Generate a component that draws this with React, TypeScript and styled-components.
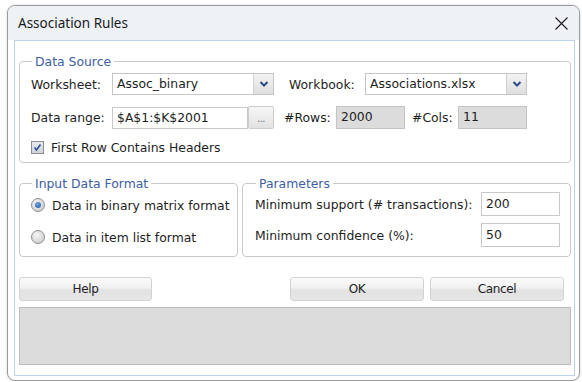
import { FC, ReactNode } from 'react';
import styled, { createGlobalStyle } from 'styled-components';

const GlobalStyle = createGlobalStyle`
  html, body {
    margin: 0;
    background: #ffffff;
  }
  * {
    box-sizing: border-box;
  }
`;

const TEXT_FONT = '"DejaVu Sans", Verdana, sans-serif';

const Window = styled.div`
  margin: 5px 0 0 7px;
  width: 573px;
  height: 376px;
  border: 1px solid #9b9b9b;
  border-radius: 8px;
  overflow: hidden;
  display: flex;
  flex-direction: column;
  background: #ffffff;
  box-shadow: 0 0 3px rgba(0, 0, 0, 0.18);
`;

const TitleBar = styled.div`
  height: 34px;
  flex: none;
  display: flex;
  align-items: center;
  justify-content: space-between;
  padding: 0 10px 0 10px;
  background: #eef2f7;
  font-family: 'Noto Sans', 'Open Sans', sans-serif;
  font-size: 13.5px;
  color: #1b1b1b;
`;

const CloseButton = styled.button`
  border: 0;
  background: transparent;
  padding: 0;
  width: 16px;
  height: 16px;
  display: flex;
  align-items: center;
  justify-content: center;
`;

const Frame = styled.div`
  flex: 1;
  margin: 0 4px 4px 6px;
  border: 1px solid #bcd3ee;
  padding: 0 3px 9px 4px;
  display: flex;
  flex-direction: column;
  font-family: ${TEXT_FONT};
  font-size: 12.4px;
  color: #1e1e1e;
`;

const Group = styled.fieldset<{ $pad: string }>`
  margin: 0;
  min-width: 0;
  border: 1px solid #cacaca;
  border-radius: 4px;
  padding: ${p => p.$pad};
  display: flex;
  flex-direction: column;
`;

const Legend = styled.legend`
  margin-left: 1px;
  padding: 0 3px;
  color: #3c60a4;
  font-size: 12.4px;
  line-height: 15px;
`;

const Row = styled.div<{ $h: number }>`
  display: flex;
  align-items: center;
  height: ${p => p.$h}px;
  white-space: nowrap;
`;

const Label = styled.span<{ $w?: number }>`
  flex: none;
  width: ${p => (p.$w ? `${p.$w}px` : 'auto')};
  white-space: nowrap;
`;

const Combo = styled.div<{ $w: number }>`
  flex: none;
  width: ${p => p.$w}px;
  height: 22px;
  display: flex;
  border: 1px solid #c6c6c6;
  background: #ffffff;
`;

const ComboText = styled.span`
  flex: 1;
  padding-left: 4px;
  line-height: 20px;
`;

const ComboArrow = styled.span`
  flex: none;
  width: 20px;
  display: flex;
  align-items: center;
  justify-content: center;
  border-left: 1px solid #d0d0d0;
  background: linear-gradient(#f3f3f3, #dedede);
`;

const TextField = styled.div<{ $w: number; $readOnly?: boolean }>`
  flex: none;
  width: ${p => p.$w}px;
  height: ${p => (p.$readOnly ? 23 : 22)}px;
  padding-left: 4px;
  line-height: 20px;
  border: 1px solid ${p => (p.$readOnly ? '#c4c4c4' : '#c9c9c9')};
  background: ${p => (p.$readOnly ? '#dcdcdc' : '#ffffff')};
`;

const NumberField = styled.div`
  flex: none;
  width: 79px;
  height: 24px;
  padding-left: 4px;
  line-height: 22px;
  border: 1px solid #c9c9c9;
  background: #ffffff;
`;

const EllipsisButton = styled.div`
  flex: none;
  width: 26px;
  height: 23px;
  border: 1px solid #cdcdcd;
  border-radius: 2px;
  background: linear-gradient(#f7f7f7, #e2e2e2);
  color: #707070;
  font-size: 10px;
  text-align: center;
  line-height: 24px;
  letter-spacing: -0.5px;
`;

const Gap = styled.span<{ $w: number }>`
  flex: none;
  width: ${p => p.$w}px;
`;

const CheckBox = styled.span`
  flex: none;
  width: 13px;
  height: 13px;
  margin-right: 7px;
  border: 1px solid #8e8e8e;
  background: linear-gradient(#e6e9ee, #cfd4db);
  display: flex;
  align-items: center;
  justify-content: center;
`;

const Radio = styled.span<{ $checked?: boolean }>`
  flex: none;
  width: 14px;
  height: 14px;
  margin-right: 7px;
  border-radius: 50%;
  border: 1px solid #8f8f8f;
  background: radial-gradient(circle at 40% 35%, #f6f6f6, #c4c4c4);
  display: flex;
  align-items: center;
  justify-content: center;
  &::after {
    content: '';
    display: ${p => (p.$checked ? 'block' : 'none')};
    width: 6px;
    height: 6px;
    border-radius: 50%;
    background: radial-gradient(circle at 40% 35%, #6fa7e6, #1c4f98);
  }
`;

const RadioList = styled.div`
  display: flex;
  flex-direction: column;
  gap: 8px;
  padding-top: 1px;
`;

const ParamList = styled.div`
  display: flex;
  flex-direction: column;
  gap: 7px;
`;

const LowerGroups = styled.div`
  display: flex;
  gap: 4px;
  margin-top: 13px;
`;

const ButtonBar = styled.div`
  display: flex;
  gap: 6px;
  margin-top: 20px;
  padding-right: 7px;
`;

const Spacer = styled.div`
  flex: 1;
`;

const Button = styled.button<{ $w?: number }>`
  width: ${p => p.$w ?? 134}px;
  height: 24px;
  padding: 0;
  border: 1px solid #d2d2d2;
  border-radius: 3px;
  background: linear-gradient(#fbfbfb 0%, #f1f1f1 45%, #e2e2e2 55%, #e6e6e6 100%);
  font-family: ${TEXT_FONT};
  font-size: 12px;
  letter-spacing: -0.4px;
  color: #222222;
`;

const StatusArea = styled.div`
  margin-top: 6px;
  height: 58px;
  border: 1px solid #bdbdbd;
  background: #dcdcdc;
`;

const Chevron: FC = () => (
  <svg width="10" height="6" viewBox="0 0 10 6">
    <polyline points="1.5,1 5,4.5 8.5,1" fill="none" stroke="#2b4c86" strokeWidth="2" />
  </svg>
);

const ComboBox: FC<{ width: number; value: string }> = ({ width, value }) => (
  <Combo $w={width}>
    <ComboText>{value}</ComboText>
    <ComboArrow>
      <Chevron />
    </ComboArrow>
  </Combo>
);

const RadioOption: FC<{ checked?: boolean; children: ReactNode }> = ({ checked, children }) => (
  <Row $h={24}>
    <Radio $checked={checked} />
    <Label>{children}</Label>
  </Row>
);

const App: FC = () => {
  return (
    <>
      <GlobalStyle />
      <Window>
        <TitleBar>
          <span>Association Rules</span>
          <CloseButton aria-label="Close">
            <svg width="13" height="13" viewBox="0 0 13 13">
              <path d="M0.5 0.5 L12.5 12.5 M12.5 0.5 L0.5 12.5" stroke="#1f1f1f" strokeWidth="1.1" />
            </svg>
          </CloseButton>
        </TitleBar>
        <Frame>
          <Group $pad="4px 10px 7px 11px" style={{ marginTop: 13 }}>
            <Legend>Data Source</Legend>
            <Row $h={22}>
              <Label $w={81}>Worksheet:</Label>
              <ComboBox width={162} value="Assoc_binary" />
              <Gap $w={15} />
              <Label $w={76}>Workbook:</Label>
              <ComboBox width={162} value="Associations.xlsx" />
            </Row>
            <Row $h={23} style={{ marginTop: 11 }}>
              <Label $w={81}>Data range:</Label>
              <TextField $w={136}>$A$1:$K$2001</TextField>
              <EllipsisButton>...</EllipsisButton>
              <Gap $w={10} />
              <Label $w={52}>#Rows:</Label>
              <TextField $w={69} $readOnly>
                2000
              </TextField>
              <Gap $w={7} />
              <Label $w={46}>#Cols:</Label>
              <TextField $w={69} $readOnly>
                11
              </TextField>
            </Row>
            <Row $h={16} style={{ marginTop: 10 }}>
              <CheckBox>
                <svg width="9" height="9" viewBox="0 0 9 9">
                  <polyline points="1.5,4.5 3.5,7 7.5,1.5" fill="none" stroke="#2c4f9c" strokeWidth="1.6" />
                </svg>
              </CheckBox>
              <span>First Row Contains Headers</span>
            </Row>
          </Group>

          <LowerGroups>
            <Group $pad="1px 4px 7px 11px" style={{ width: 219 }}>
              <Legend>Input Data Format</Legend>
              <RadioList>
                <RadioOption checked>Data in binary matrix format</RadioOption>
                <RadioOption>Data in item list format</RadioOption>
              </RadioList>
            </Group>
            <Group $pad="1px 10px 7px 12px" style={{ flex: 1 }}>
              <Legend>Parameters</Legend>
              <ParamList>
                <Row $h={24}>
                  <Label>Minimum support (# transactions):</Label>
                  <Spacer />
                  <NumberField>200</NumberField>
                </Row>
                <Row $h={24}>
                  <Label>Minimum confidence (%):</Label>
                  <Spacer />
                  <NumberField>50</NumberField>
                </Row>
              </ParamList>
            </Group>
          </LowerGroups>

          <ButtonBar>
            <Button $w={133}>Help</Button>
            <Spacer />
            <Button>OK</Button>
            <Button>Cancel</Button>
          </ButtonBar>
          <StatusArea />
        </Frame>
      </Window>
    </>
  );
};

export default App;
